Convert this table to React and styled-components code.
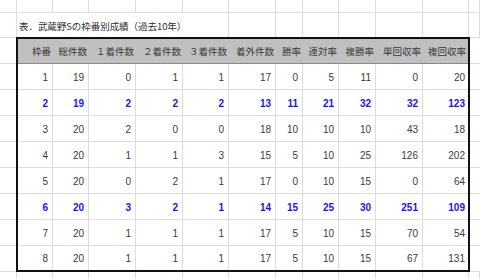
import React from "react";
import styled, { createGlobalStyle } from "styled-components";

const LINE = "#dcdcdc";
const SHEET_COLS = "17px 36px 36px 47px 47px 46px 47px 27px 36px 37px 47px 46px 1fr";
const TABLE_COLS = "35px 36px 47px 47px 46px 47px 27px 36px 37px 47px 45px";

const Global = createGlobalStyle`
  html, body { margin: 0; padding: 0; background: #fff; }
  body {
    font-family: "Liberation Sans", "Noto Sans CJK JP", sans-serif;
    color: #3a3a3a;
  }
  * { box-sizing: border-box; }
`;

const Sheet = styled.div`
  width: 480px;
  height: 279px;
  overflow: hidden;
  display: flex;
  flex-direction: column;
  background: #fff;
`;

const SheetRow = styled.div`
  display: grid;
  grid-template-columns: ${SHEET_COLS};
  height: ${(p) => p.$h}px;
  flex: none;
`;

const GridCell = styled.div`
  border-right: 1px solid ${LINE};
  border-bottom: ${(p) => (p.$bottom ? `1px solid ${LINE}` : "none")};
  grid-column: ${(p) => p.$span ? `span ${p.$span}` : "auto"};
`;

const TitleCell = styled(GridCell)`
  display: flex;
  align-items: center;
  padding-left: 2px;
  padding-top: 1px;
  font-family: "Noto Sans CJK JP", sans-serif;
  font-size: 9.5px;
  color: #333;
  white-space: nowrap;
  letter-spacing: -0.05px;
`;

const Band = styled.div`
  display: grid;
  grid-template-columns: 16px 454px 1fr;
  height: 234px;
  flex: none;
`;

const Gutter = styled.div`
  background-image: repeating-linear-gradient(
    to bottom,
    transparent 0,
    transparent 25px,
    ${LINE} 25px,
    ${LINE} 26px
  );
`;

const Table = styled.div`
  margin-top: -1px;
  height: 235px;
  border: 2px solid #111;
  display: flex;
  flex-direction: column;
`;

const HeaderRow = styled.div`
  display: grid;
  grid-template-columns: ${TABLE_COLS};
  height: 25px;
  background: #c0c0c0;
  border-bottom: 1px solid #8a8a8a;
  flex: none;
`;

const HeaderCell = styled.div`
  display: flex;
  align-items: center;
  justify-content: flex-end;
  padding-right: 2px;
  font-family: "Noto Sans CJK JP", sans-serif;
  font-size: 9.5px;
  color: #3a3a3a;
  white-space: nowrap;
`;

const DataRow = styled.div`
  display: grid;
  grid-template-columns: ${TABLE_COLS};
  height: 26px;
  flex: none;
  border-bottom: 1px solid ${LINE};
  color: ${(p) => (p.$hl ? "#1414ff" : "#3a3a3a")};
  font-weight: ${(p) => (p.$hl ? 700 : 400)};
  &:last-child {
    height: 24px;
    border-bottom: none;
  }
`;

const DataCell = styled.div`
  display: flex;
  align-items: center;
  justify-content: flex-end;
  padding-right: 4px;
  padding-top: 1px;
  font-size: 10px;
  border-right: 1px solid ${LINE};
  &:last-child {
    border-right: none;
    padding-right: 3px;
  }
`;

const headers = [
  "枠番",
  "総件数",
  "１着件数",
  "２着件数",
  "３着件数",
  "着外件数",
  "勝率",
  "連対率",
  "複勝率",
  "単回収率",
  "複回収率",
];

const rows = [
  { hl: false, v: [1, 19, 0, 1, 1, 17, 0, 5, 11, 0, 20] },
  { hl: true, v: [2, 19, 2, 2, 2, 13, 11, 21, 32, 32, 123] },
  { hl: false, v: [3, 20, 2, 0, 0, 18, 10, 10, 10, 43, 18] },
  { hl: false, v: [4, 20, 1, 1, 3, 15, 5, 10, 25, 126, 202] },
  { hl: false, v: [5, 20, 0, 2, 1, 17, 0, 10, 15, 0, 64] },
  { hl: true, v: [6, 20, 3, 2, 1, 14, 15, 25, 30, 251, 109] },
  { hl: false, v: [7, 20, 1, 1, 1, 17, 5, 10, 15, 70, 54] },
  { hl: false, v: [8, 20, 1, 1, 1, 17, 5, 10, 15, 67, 131] },
];

const thirteen = Array.from({ length: 13 });

export default function App() {
  return (
    <>
      <Global />
      <Sheet>
        <SheetRow $h={13}>
          {thirteen.map((_, i) => (
            <GridCell key={i} $bottom />
          ))}
        </SheetRow>
        <SheetRow $h={25}>
          <GridCell $bottom />
          <TitleCell $bottom $span={5}>
            表．武蔵野Sの枠番別成績（過去10年）
          </TitleCell>
          {Array.from({ length: 7 }).map((_, i) => (
            <GridCell key={i} $bottom />
          ))}
        </SheetRow>
        <Band>
          <Gutter />
          <Table>
            <HeaderRow>
              {headers.map((h) => (
                <HeaderCell key={h}>{h}</HeaderCell>
              ))}
            </HeaderRow>
            {rows.map((r, i) => (
              <DataRow key={i} $hl={r.hl}>
                {r.v.map((n, j) => (
                  <DataCell key={j}>{n}</DataCell>
                ))}
              </DataRow>
            ))}
          </Table>
          <Gutter />
        </Band>
        <SheetRow $h={20}>
          {thirteen.map((_, i) => (
            <GridCell key={i} />
          ))}
        </SheetRow>
      </Sheet>
    </>
  );
}
